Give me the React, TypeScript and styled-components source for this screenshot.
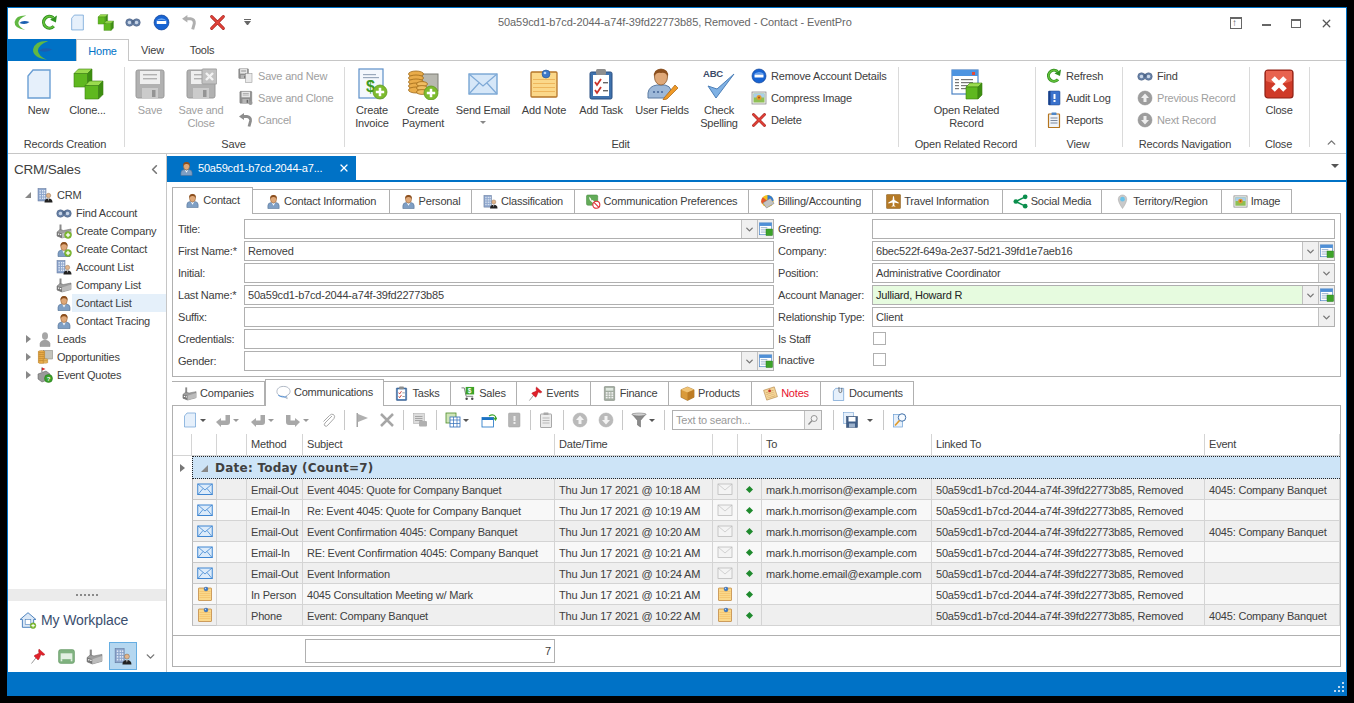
import React from "react";
import styled, { createGlobalStyle, css } from "styled-components";
import { ChevronDown, ChevronLeft, ChevronUp, X as XIcon } from "lucide-react";

const Global = createGlobalStyle`
  html, body { margin: 0; padding: 0; background: #000; width: 1354px; height: 703px; overflow: hidden; }
  #root { width: 1354px; height: 703px; }
  * { box-sizing: border-box; }
  body { font-family: "Liberation Sans", Arial, sans-serif; font-size: 11px; letter-spacing: -0.2px; color: #404040; }
`;

/* ---------- icon drawings ---------- */
const cube = (x: number, y: number, s: number) => (
  <g stroke="#3d7f12" strokeWidth="0.6">
    <polygon points={`${x},${y + .25 * s} ${x + .25 * s},${y} ${x + s},${y} ${x + .75 * s},${y + .25 * s}`} fill="#9adb4e" />
    <polygon points={`${x},${y + .25 * s} ${x + .75 * s},${y + .25 * s} ${x + .75 * s},${y + s} ${x},${y + s}`} fill="#5fb81f" />
    <polygon points={`${x + .75 * s},${y + .25 * s} ${x + s},${y} ${x + s},${y + .75 * s} ${x + .75 * s},${y + s}`} fill="#3c8f10" />
  </g>
);
const plus = (cx: number, cy: number, r = 7) => (
  <g>
    <circle cx={cx} cy={cy} r={r} fill="#7dbb2e" stroke="#5f9a1c" strokeWidth="0.8" />
    <rect x={cx - r * .6} y={cy - r * .18} width={r * 1.2} height={r * .36} fill="#fff" />
    <rect x={cx - r * .18} y={cy - r * .6} width={r * .36} height={r * 1.2} fill="#fff" />
  </g>
);
const personShape = (
  <g>
    <path d="M4 31V25Q4 19 11 18L16 21 21 18Q28 19 28 25V31Z" fill="#7f9fc4" stroke="#4e6d92" strokeWidth="1.2" />
    <path d="M12 18L16 25 20 18 16 21Z" fill="#fff" />
    <ellipse cx="16" cy="11" rx="6.5" ry="8" fill="#dfa878" stroke="#8a5a30" strokeWidth="1" />
    <path d="M9 11Q8 2 16 2 24 2 23 11 21 6 16 6.5 11 6 9 11Z" fill="#8b4f1e" />
  </g>
);
const buildingShape = (
  <g>
    <rect x="2" y="3" width="16" height="25" fill="#8ea6cc" stroke="#5d7298" />
    {[6, 11, 16, 21].map(y => [5, 10, 14].map(x => <rect key={`${x}${y}`} x={x} y={y} width="2.6" height="3" fill="#dfe8f5" />))}
    <circle cx="23" cy="17" r="4.4" fill="#e2b58c" stroke="#7a5a3a" strokeWidth=".8" />
    <path d="M15 31Q15 23 23 23 31 23 31 31Z" fill="#222" />
    <path d="M22 23h2l-1 5z" fill="#fff" />
  </g>
);
const factoryShape = (
  <g>
    <rect x="7" y="3" width="4" height="12" fill="#8a8a8a" />
    <path d="M2 18L8 13 15 15 30 12V25L12 30 2 26Z" fill="#9d9d9d" stroke="#666" />
    <path d="M2 18L12 21V30L2 26Z" fill="#777" />
    <path d="M12 21L30 15V25L12 30Z" fill="#bcbcbc" />
    <rect x="4" y="21" width="2.5" height="2.5" fill="#fff" /><rect x="8" y="22" width="2.5" height="2.5" fill="#fff" />
  </g>
);
const noteShape = (
  <g>
    <rect x="3" y="4" width="26" height="25" rx="1" fill="#fbd88a" stroke="#b5752a" strokeWidth="1.3" />
    {[11, 15, 19, 23].map(y => <rect key={y} x="5" y={y} width="22" height="1" fill="#eeb65c" />)}
    <circle cx="18" cy="6" r="4" fill="#3d78c8" stroke="#27548f" strokeWidth=".6" />
    <circle cx="17" cy="5" r="1.3" fill="#bcd7f5" />
  </g>
);
const binocShape = (
  <g>
    <circle cx="9" cy="17" r="7.5" fill="#6680a6" stroke="#465b7d" />
    <circle cx="23" cy="17" r="7.5" fill="#6680a6" stroke="#465b7d" />
    <circle cx="9" cy="17" r="3.6" fill="#c9d6e8" /><circle cx="23" cy="17" r="3.6" fill="#c9d6e8" />
    <rect x="13" y="12" width="6" height="6" fill="#4f6688" />
  </g>
);
const minusShape = (
  <g>
    <circle cx="16" cy="16" r="14" fill="#1763d2" stroke="#0e3f93" strokeWidth="1.3" />
    <path d="M5 13Q16 3 27 13 16 10 5 13Z" fill="#6ca5f0" />
    <rect x="7" y="13" width="18" height="6" rx="1" fill="#fff" />
  </g>
);
const undoShape = (
  <g fill="none" stroke="#8d8d8d" strokeWidth="5.6">
    <path d="M10 9H18Q26 10 25 18L22 29" />
    <path d="M2 9L12 2V16Z" fill="#8d8d8d" stroke="none" />
  </g>
);
const redX = (
  <g fill="none" strokeLinecap="round">
    <path d="M5 5L27 27M27 5L5 27" stroke="#a8201a" strokeWidth="5.6" />
    <path d="M5 5L27 27M27 5L5 27" stroke="#e2433a" strokeWidth="3.4" />
  </g>
);
const floppyShape = (
  <g>
    <rect x="2" y="2" width="28" height="28" rx="2" fill="#8f8f8f" stroke="#6f6f6f" />
    <rect x="6" y="3" width="20" height="13" fill="#e6e6e6" />
    <rect x="9" y="6" width="14" height="1.4" fill="#8f8f8f" /><rect x="9" y="10" width="14" height="1.4" fill="#8f8f8f" />
    <rect x="8" y="20" width="16" height="10" fill="#b5b5b5" /><rect x="18" y="22" width="3.5" height="7" fill="#666" />
  </g>
);
const fieldEdit = (
  <g>
    <rect x="1" y="2" width="28" height="27" fill="#fff" stroke="#4f86c6" strokeWidth="1.6" />
    <rect x="1" y="2" width="28" height="7" fill="#4f8fd6" />
    {[12, 17, 22].map(y => <rect key={y} x="4" y={y} width="15" height="2" fill="#8ea8c8" />)}
    <rect x="16" y="16" width="15" height="15" fill="#3da329" stroke="#25761a" />
  </g>
);

const shapes: Record<string, React.ReactNode> = {
  logo: (
    <g>
      <path d="M25 3Q6 2 3 15 2 27 23 30 11 25 10 17 11 8 25 3Z" fill="#62b843" />
      <path d="M12 17Q18 11 31 15 24 21 12 17Z" fill="#1a5fb0" />
    </g>
  ),
  refresh: (
    <g fill="none">
      <path d="M24 23A11 11 0 1 1 23 7" stroke="#2d8a1c" strokeWidth="6" />
      <path d="M24 23A11 11 0 1 1 23 7" stroke="#63c23a" strokeWidth="3" />
      <path d="M17 11L30 3 28 16Z" fill="#2f9220" />
    </g>
  ),
  doc: <path d="M10 2H27V30H5V8Z" fill="#e6f0fb" stroke="#6b9fd4" strokeWidth="1.4" />,
  clone: <g>{cube(2, 1, 18)}{cube(13, 13, 18)}</g>,
  binoc: binocShape,
  minus: minusShape,
  undo: undoShape,
  x: redX,
  floppy: floppyShape,
  saveClose: (
    <g>{floppyShape}<rect x="17" y="1" width="15" height="15" rx="1" fill="#a8a8a8" stroke="#777" /><path d="M21 5L28 12M28 5L21 12" stroke="#eee" strokeWidth="2.4" /></g>
  ),
  saveNew: (
    <g>
      <g transform="scale(.7)">{floppyShape}</g>
      <rect x="15" y="11" width="13" height="18" fill="#e9e9e9" stroke="#8d8d8d" />
    </g>
  ),
  saveClone: <g><g transform="translate(2 1) scale(.85)">{floppyShape}</g><circle cx="25" cy="26" r="4" fill="#9a9a9a" /></g>,
  invoice: (
    <g>
      <rect x="3" y="1" width="24" height="29" fill="#f4f8fd" stroke="#5c8fc8" strokeWidth="1.2" />
      <rect x="7" y="6" width="13" height="1.2" fill="#9aa9bc" /><rect x="7" y="9" width="16" height="1.2" fill="#9aa9bc" />
      <text x="10" y="24" fontSize="16" fontWeight="700" fontFamily="Liberation Sans" fill="#3c9a25">$</text>
      {plus(24, 24, 7)}
    </g>
  ),
  payment: (
    <g>
      <rect x="13" y="6" width="18" height="17" fill="#b8b8b0" stroke="#7d7d75" />
      {[2, 6, 10, 14, 18].map(y => <ellipse key={y} cx="9" cy={y + 4} rx="7.5" ry="3" fill="#e9ac4a" stroke="#a06a18" strokeWidth=".8" />)}
      {[14, 18, 22].map(y => <ellipse key={y} cx="15" cy={y + 2} rx="5.5" ry="2.4" fill="#f0bd62" stroke="#a06a18" strokeWidth=".8" />)}
      {plus(24, 25, 7)}
    </g>
  ),
  envelope: (
    <g>
      <rect x="2" y="6" width="28" height="20" fill="#d6e7f8" stroke="#6e9fd0" strokeWidth="1.3" />
      <path d="M2 6L16 18 30 6M2 26L12 15M30 26L20 15" fill="none" stroke="#7ea9d6" strokeWidth="1.2" />
    </g>
  ),
  envelopeRow: (
    <g>
      <rect x="1.5" y="6" width="29" height="21" fill="#dcebfa" stroke="#3f86d2" strokeWidth="2" />
      <path d="M2 6L16 18 30 6M2 27L12 15M30 27L20 15" fill="none" stroke="#3f86d2" strokeWidth="1.6" />
    </g>
  ),
  note: noteShape,
  task: (
    <g>
      <rect x="5" y="4" width="22" height="27" rx="1.5" fill="#3f72ad" stroke="#2a4f80" />
      <rect x="8" y="7" width="16" height="21" fill="#fff" />
      <rect x="11" y="1" width="10" height="6" rx="1.5" fill="#8e8e8e" />
      <path d="M10 14L12 17 16 11M10 22L12 25 16 19" fill="none" stroke="#c9342b" strokeWidth="1.8" />
      <rect x="18" y="14" width="5" height="1.4" fill="#666" /><rect x="18" y="22" width="5" height="1.4" fill="#666" />
    </g>
  ),
  userFields: (
    <g>
      <path d="M2 30V25Q3 18 11 17H19Q24 18 25 22L20 30Z" fill="#9db8d8" stroke="#5b7ba2" />
      <ellipse cx="15" cy="9" rx="6.5" ry="8" fill="#dfa878" stroke="#8a5a30" strokeWidth=".8" />
      <path d="M8 9Q7 1 15 1 23 1 22 9 20 4 15 5 10 4 8 9Z" fill="#8b4f1e" />
      {[8, 12, 16].map(x => <circle key={x} cx={x} cy="24" r="1.1" fill="#49699a" />)}
      <path d="M18 30L29 17 32 20 21 31 17 32Z" fill="#ef9a27" stroke="#a8620e" strokeWidth=".7" />
    </g>
  ),
  spell: (
    <g>
      <text x="0" y="9" fontSize="9.5" fontWeight="700" fontFamily="Liberation Sans" fill="#3b4a68">ABC</text>
      <path d="M5 18L13 30 31 6 14 21Z" fill="#7fb1e4" stroke="#4c7fb8" strokeWidth="1" />
    </g>
  ),
  image: (
    <g>
      <rect x="2" y="4" width="28" height="24" fill="#f0f0f0" stroke="#7d7d7d" strokeWidth="1.4" />
      <rect x="5" y="7" width="22" height="18" fill="#8fbf55" />
      <rect x="5" y="7" width="22" height="8" fill="#a9cdea" />
      <circle cx="16" cy="15" r="5" fill="#e49a2e" /><circle cx="16" cy="15" r="2" fill="#a8501a" />
    </g>
  ),
  related: (
    <g>
      <rect x="1" y="2" width="26" height="24" fill="#fff" stroke="#4b82c4" strokeWidth="1.2" />
      <rect x="1" y="2" width="26" height="6" fill="#4d94e0" /><rect x="21" y="4" width="3" height="3" fill="#e04a3a" />
      {[11, 14, 17, 20].map(y => <g key={y}><rect x="4" y={y} width="4" height="1.2" fill="#777" /><rect x="10" y={y} width="12" height="1.2" fill="#777" /></g>)}
      {cube(15, 15, 16)}
    </g>
  ),
  audit: (
    <g>
      <rect x="5" y="2" width="23" height="28" rx="2" fill="#3a72cc" stroke="#1e4488" />
      <rect x="5" y="2" width="4" height="28" fill="#18408a" />
      <rect x="15" y="8" width="4" height="10" rx="1" fill="#fff" /><rect x="15" y="20" width="4" height="4" fill="#fff" />
    </g>
  ),
  reports: (
    <g>
      <rect x="5" y="4" width="22" height="27" rx="1" fill="#f0f4f9" stroke="#b5751f" strokeWidth="2.4" />
      <rect x="11" y="1" width="10" height="5" rx="1" fill="#4d86c8" />
      {[11, 16, 21].map(y => <rect key={y} x="9" y={y} width="14" height="2" fill="#7d8aa0" />)}
    </g>
  ),
  up: (
    <g>
      <circle cx="16" cy="16" r="14" fill="#9d9d9d" stroke="#8a8a8a" />
      <path d="M16 7L24 16H19V24H13V16H8Z" fill="#eee" />
    </g>
  ),
  down: (
    <g>
      <circle cx="16" cy="16" r="14" fill="#9d9d9d" stroke="#8a8a8a" />
      <path d="M16 25L24 16H19V8H13V16H8Z" fill="#eee" />
    </g>
  ),
  closeBig: (
    <g>
      <rect x="2" y="2" width="28" height="28" rx="3" fill="#cf3a28" stroke="#8f2015" strokeWidth="1.2" />
      <path d="M3 3H29V13Q16 18 3 13Z" fill="#e8634f" />
      <path d="M10 10L22 22M22 10L10 22" stroke="#fff" strokeWidth="5" />
    </g>
  ),
  person: personShape,
  building: buildingShape,
  factory: factoryShape,
  addCompany: <g>{factoryShape}{plus(24, 24, 7)}</g>,
  addContact: <g>{personShape}{plus(24, 24, 7)}</g>,
  lead: (
    <g>
      <ellipse cx="16" cy="10" rx="6" ry="7.5" fill="#a6a6a6" />
      <path d="M6 31V25Q7 19 16 18 25 19 26 25V31Z" fill="#a0a0a0" stroke="#8c8c8c" />
    </g>
  ),
  opp: (
    <g>
      <rect x="13" y="3" width="18" height="17" fill="#c3c3bb" stroke="#7d7d75" />
      {[2, 6, 10, 14, 18, 22].map(y => <ellipse key={y} cx="9" cy={y + 4} rx="7" ry="3" fill="#e9ac4a" stroke="#a06a18" strokeWidth=".8" />)}
      {[20, 24].map(y => <ellipse key={y} cx="17" cy={y + 2} rx="5" ry="2.4" fill="#f0bd62" stroke="#a06a18" strokeWidth=".8" />)}
    </g>
  ),
  quote: (
    <g>
      <rect x="9" y="1" width="1.6" height="9" fill="#555" /><path d="M10 1L17 4 10 7Z" fill="#d02828" />
      <path d="M2 14L18 8 26 14V24L10 30 2 24Z" fill="#9a9a9a" stroke="#555" />
      <circle cx="23" cy="23" r="8" fill="#3aa12a" stroke="#25761a" />
      <text x="19.6" y="27.5" fontSize="12" fontWeight="700" fontFamily="Liberation Sans" fill="#fff">?</text>
    </g>
  ),
  commPref: (
    <g>
      <rect x="1" y="2" width="24" height="22" rx="3" fill="#63ab59" stroke="#3a8033" />
      <path d="M7 6Q6 14 15 19L18 16 14 13 12 14 10 9Z" fill="#fff" />
      <circle cx="22" cy="23" r="7.5" fill="#fff" stroke="#e02d35" strokeWidth="2.4" />
      <path d="M17 18L27 28" stroke="#e02d35" strokeWidth="2.4" />
    </g>
  ),
  billing: (
    <g>
      <circle cx="16" cy="15" r="13" fill="#f4c21b" />
      <path d="M16 15L16 2A13 13 0 0 1 29 15Z" fill="#2f7bd6" />
      <path d="M16 15L4 21A13 13 0 0 1 6 7Z" fill="#e6572c" />
      <path d="M6 19L22 9 30 20 14 30Z" fill="#c3c3c3" stroke="#777" />
    </g>
  ),
  plane: (
    <g>
      <rect x="1" y="1" width="30" height="30" rx="1.5" fill="#b57a26" stroke="#7d5214" />
      <path d="M15 5H17L18 13 27 18V20L18 18 17.5 24 20 26V27L16 26 12 27V26L14.5 24 14 18 5 20V18L14 13Z" fill="#fff" />
    </g>
  ),
  share: (
    <g fill="#0b8f4d">
      <circle cx="6" cy="16" r="5" /><circle cx="26" cy="6" r="5" /><circle cx="26" cy="26" r="5" />
      <path d="M6 16L26 6M6 16L26 26" stroke="#0b8f4d" strokeWidth="3" fill="none" />
    </g>
  ),
  mapPin: (
    <g>
      <path d="M16 31Q7 18 7 11A9 9 0 0 1 25 11Q25 18 16 31Z" fill="#c9c9c9" stroke="#a7a7a7" />
      <circle cx="16" cy="11" r="5" fill="#69c3ea" />
    </g>
  ),
  bubble: (
    <g>
      <path d="M16 3C7 3 2 8 2 14 2 20 7 24 15 24L24 29 22 23C27 21 30 18 30 14 30 8 25 3 16 3Z" fill="#fff" stroke="#8a96a8" strokeWidth="1.4" />
      <path d="M5 22C10 26 18 26 22 25" fill="none" stroke="#3f86d6" strokeWidth="2" />
    </g>
  ),
  sales: (
    <g>
      <path d="M1 4H7L11 22H26" fill="none" stroke="#555" strokeWidth="1.6" />
      <rect x="10" y="2" width="18" height="16" fill="#3da329" />
      <text x="14.5" y="15" fontSize="14" fontWeight="700" fontFamily="Liberation Sans" fill="#fff">$</text>
      <circle cx="12" cy="27" r="2.6" fill="#444" /><circle cx="24" cy="27" r="2.6" fill="#444" />
    </g>
  ),
  pin: (
    <g>
      <path d="M3 31L14 17" stroke="#999" strokeWidth="2" />
      <path d="M18 2L30 13 26 15 22 13 19 20Q18 23 16 24L8 16Q10 13 13 13L18 10 17 6Z" fill="#e0212b" stroke="#a5131b" strokeWidth=".8" />
    </g>
  ),
  calc: (
    <g>
      <rect x="5" y="1" width="22" height="30" rx="1.5" fill="#a2aca0" stroke="#6f786e" />
      <rect x="8" y="4" width="16" height="6" fill="#dfe8df" />
      {[13, 18, 23].map(y => [8, 14, 20].map(x => <rect key={`${x}${y}`} x={x} y={y} width="4" height="3.5" fill="#f2f2f2" />))}
    </g>
  ),
  box: (
    <g>
      <path d="M16 2L30 8V24L16 31 2 24V8Z" fill="#d99a3a" stroke="#8b5a16" />
      <path d="M2 8L16 14 30 8 16 2Z" fill="#f1c476" />
      <path d="M16 14V31L30 24V8Z" fill="#bd7c24" />
    </g>
  ),
  noteTag: (
    <g transform="rotate(-18 16 16)">
      <rect x="4" y="5" width="24" height="22" fill="#f4d59a" stroke="#a3722f" />
      {[11, 15, 19, 23].map(y => <rect key={y} x="7" y={y} width="17" height="1" fill="#c79a55" />)}
      <circle cx="16" cy="10" r="3" fill="#c7302a" />
    </g>
  ),
  docs: (
    <g>
      <path d="M10 5H27V31H5V11Z" fill="#e6f0fb" stroke="#5f93cc" strokeWidth="1.4" />
      <path d="M17 2V11Q17 14 20 14 23 14 23 11V4" fill="none" stroke="#4a4a4a" strokeWidth="1.5" />
    </g>
  ),
  reply: <path d="M2 20L12 12V17H21V6H30V20Q30 26 24 26H12V30Z" fill="#a8a8a8" />,
  forward: <path d="M30 20L20 12V17H11V6H2V20Q2 26 8 26H20V30Z" fill="#a8a8a8" />,
  clip: (
    <path d="M24 8L10 22Q7 26 10 28 13 30 16 26L28 13Q31 8 27 5 23 3 19 7L7 19" fill="none" stroke="#a9a9a9" strokeWidth="2" />
  ),
  flag: (
    <g>
      <rect x="5" y="2" width="3" height="28" fill="#a4a4a4" />
      <path d="M8 4L28 12 8 20Z" fill="#b0b0b0" />
    </g>
  ),
  xGrey: <path d="M4 4L28 28M28 4L4 28" stroke="#a6a6a6" strokeWidth="5" />,
  printer: (
    <g>
      <rect x="3" y="3" width="22" height="20" fill="#dcdcdc" stroke="#a6a6a6" />
      {[8, 12, 16].map(y => <rect key={y} x="6" y={y} width="15" height="2" fill="#a6a6a6" />)}
      <rect x="14" y="18" width="16" height="11" rx="2" fill="#b0b0b0" />
    </g>
  ),
  table: (
    <g>
      <rect x="2" y="2" width="20" height="20" fill="#cfe4b8" stroke="#4d8d28" strokeWidth="1.6" />
      <rect x="10" y="10" width="20" height="20" fill="#fff" stroke="#2d6cb8" strokeWidth="1.6" />
      <path d="M10 16H30M10 23H30M17 10V30M24 10V30" stroke="#2d6cb8" strokeWidth="1.4" />
    </g>
  ),
  windowArrow: (
    <g>
      <rect x="2" y="11" width="23" height="19" fill="#fff" stroke="#1b72c4" strokeWidth="1.6" />
      <rect x="2" y="11" width="23" height="5" fill="#1b72c4" />
      <path d="M16 8Q24 3 29 9V15M25 11L29 16 32 11" fill="none" stroke="#3da329" strokeWidth="2.2" />
    </g>
  ),
  bookGrey: (
    <g>
      <rect x="5" y="2" width="23" height="28" rx="2" fill="#b5b5b5" stroke="#a0a0a0" />
      <rect x="15" y="8" width="4" height="10" fill="#eee" /><rect x="15" y="20" width="4" height="4" fill="#eee" />
    </g>
  ),
  clipGrey: (
    <g>
      <rect x="5" y="4" width="22" height="27" rx="1" fill="#ececec" stroke="#a8a8a8" strokeWidth="2" />
      <rect x="11" y="1" width="10" height="5" rx="1" fill="#a8a8a8" />
      {[11, 16, 21].map(y => <rect key={y} x="9" y={y} width="14" height="2" fill="#b8b8b8" />)}
    </g>
  ),
  funnel: (
    <g>
      <path d="M2 4H30L19 17V30L13 26V17Z" fill="#8a8a8a" stroke="#5f5f5f" />
      <ellipse cx="16" cy="5" rx="14" ry="3" fill="#d0d0d0" stroke="#777" />
    </g>
  ),
  saveBlue: (
    <g>
      <rect x="3" y="1" width="20" height="22" fill="#e6f0fb" stroke="#5f93cc" />
      <rect x="9" y="9" width="22" height="22" fill="#3f5e88" stroke="#2a4468" />
      <rect x="13" y="10" width="14" height="9" fill="#fff" />
      <rect x="14" y="23" width="12" height="8" fill="#9db2cc" />
    </g>
  ),
  magnify: (
    <g>
      <rect x="3" y="5" width="18" height="25" fill="#e6f0fb" stroke="#6b9fd4" strokeWidth="1.4" />
      <circle cx="20" cy="11" r="7.5" fill="#f7fbff" stroke="#3f6fa8" strokeWidth="2" />
      <path d="M15 17L6 27" stroke="#e09a2a" strokeWidth="3.4" />
    </g>
  ),
  search: (
    <g>
      <circle cx="19" cy="12" r="8" fill="#f4f4f4" stroke="#8a8a8a" strokeWidth="2.4" />
      <path d="M13 18L4 28" stroke="#8a8a8a" strokeWidth="3.4" />
    </g>
  ),
  house: (
    <g>
      <path d="M16 3L30 15H26V29H6V15H2Z" fill="#dbe8f6" stroke="#3f78b8" strokeWidth="1.6" />
      <rect x="11" y="15" width="10" height="9" fill="#fff" stroke="#3f78b8" />
      {plus(25, 26, 5)}
    </g>
  ),
  bed: (
    <g>
      <rect x="1" y="3" width="30" height="26" rx="4" fill="#7fb27f" stroke="#5d925d" />
      <rect x="5" y="10" width="22" height="11" fill="#e2efe2" />
      <rect x="5" y="21" width="3" height="4" fill="#e2efe2" /><rect x="24" y="21" width="3" height="4" fill="#e2efe2" />
    </g>
  ),
  fieldEdit,
  envelopeGrey: (
    <g>
      <rect x="2" y="6" width="28" height="21" fill="#f4f4f4" stroke="#b0b0b0" strokeWidth="1.3" />
      <path d="M2 6L16 18 30 6" fill="none" stroke="#b8b8b8" strokeWidth="1.2" />
    </g>
  ),
};

const Svg = styled.svg<{ $muted?: boolean }>`
  flex: none;
  display: block;
  ${p => p.$muted && css`filter: grayscale(1) opacity(.7);`}
`;
const Icon = ({ name, size = 16, muted }: { name: string; size?: number; muted?: boolean }) => (
  <Svg viewBox="0 0 32 32" width={size} height={size} $muted={muted}>{shapes[name]}</Svg>
);

/* ---------- window ---------- */
const Screen = styled.div`
  width: 1354px; height: 703px; padding: 7px; background: #000;
`;
const Win = styled.div`
  width: 1340px; height: 689px; border: 1px solid #0072c6; background: #fff;
  display: flex; flex-direction: column;
`;
const TitleBar = styled.div`
  height: 31px; display: flex; align-items: center; padding-bottom: 3px; flex: none;
`;
const Qat = styled.div`
  display: flex; align-items: center; margin-left: -1px;
`;
const QatBtn = styled.div`
  width: 28px; height: 24px; display: flex; align-items: center; justify-content: center;
`;
const QatMore = styled.div`
  width: 32px; display: flex; justify-content: center;
`;
const MoreGlyph = styled.div`
  width: 7px; height: 6px; border-top: 1px solid #666;
  &::after { content: ""; display: block; margin-top: 1px; border: 3px solid transparent; border-top: 4px solid #666; border-bottom: 0; }
`;
const TitleText = styled.div`
  margin-left: 235px; font-size: 11px; color: #666; white-space: nowrap; letter-spacing: -0.08px;
`;
const Controls = styled.div`
  margin-left: auto; display: flex; align-items: center; padding: 2px 5px 0 0;
`;
const Ctl = styled.div`
  width: 30px; height: 22px; display: flex; align-items: center; justify-content: center; color: #555;
`;
const PinGlyph = styled.div`
  width: 12px; height: 12px; border: 1px solid #666; border-top-width: 2px; position: relative;
  &::after { content: "↑"; position: absolute; left: 1px; top: -2px; font-size: 10px; color: #555; line-height: 12px; }
`;
const MinGlyph = styled.div` width: 9px; height: 2px; background: #666; margin-top: 4px; `;
const MaxGlyph = styled.div` width: 10px; height: 9px; border: 1px solid #666; border-top-width: 2px; `;

const TabStrip = styled.div`
  height: 22px; flex: none; display: flex; border-bottom: 1px solid #c6c6c6;
`;
const Logo = styled.div`
  width: 68px; height: 22px; background: #0072c6; display: flex; align-items: center; justify-content: center; flex: none;
`;
const RTab = styled.div<{ $w: number; $on?: boolean }>`
  width: ${p => p.$w}px; height: 22px; text-align: center; line-height: 23px; font-size: 11px;
  color: ${p => p.$on ? "#0072c6" : "#404040"};
  ${p => p.$on && css`background: #fff; border: 1px solid #c6c6c6; border-bottom: 0;`}
`;

const Ribbon = styled.div`
  height: 93px; flex: none; display: flex; border-bottom: 1px solid #c6c6c6; padding-top: 6px;
`;
const Group = styled.div<{ $w: number; $last?: boolean }>`
  width: ${p => p.$w}px; height: 80px; display: flex; flex-direction: column; flex: none;
  ${p => !p.$last && css`border-right: 1px solid #dadada;`}
`;
const GroupBody = styled.div<{ $pl?: number }>`
  flex: 1; display: flex; padding-left: ${p => p.$pl || 0}px; min-height: 0;
`;
const GroupLabel = styled.div`
  height: 14px; line-height: 14px; margin-bottom: -4px; padding-right: 2px; text-align: center; color: #404040; white-space: nowrap;
`;
const Big = styled.div<{ $w: number; $off?: boolean }>`
  width: ${p => p.$w}px; flex: none; display: flex; flex-direction: column; align-items: center; padding-top: 1px;
  color: ${p => p.$off ? "#a0a0a0" : "#404040"};
`;
const BigText = styled.div`
  margin-top: 4px; text-align: center; line-height: 13px; white-space: pre-line;
`;
const Caret = styled.div<{ $c?: string }>`
  width: 0; height: 0; border-left: 3px solid transparent; border-right: 3px solid transparent; border-top: 3px solid ${p => p.$c || "#555"}; flex: none;
`;
const BigCaret = styled(Caret)` margin-top: 4px; border-top-color: #888; `;
const SmallCol = styled.div<{ $ml?: number }>`
  display: flex; flex-direction: column; margin-top: -2px; margin-left: ${p => p.$ml || 0}px;
`;
const Small = styled.div<{ $off?: boolean }>`
  height: 22px; display: flex; align-items: center; gap: 4px; white-space: nowrap;
  color: ${p => p.$off ? "#a0a0a0" : "#404040"};
`;
const CollapseBtn = styled.div`
  margin: 69px 0 0 15px; color: #777;
`;

/* ---------- middle ---------- */
const Middle = styled.div` flex: 1; display: flex; min-height: 0; `;
const Side = styled.div`
  width: 159px; flex: none; border-right: 1px solid #c6c6c6; display: flex; flex-direction: column;
`;
const SideHead = styled.div`
  height: 32px; display: flex; align-items: center; justify-content: space-between; padding: 4px 4px 6px 6px;
  font-size: 13.5px; color: #404040; flex: none;
`;
const Tree = styled.div` flex: 1; `;
const TreeRow = styled.div<{ $level: number }>`
  height: 18px; display: flex; align-items: center; padding-left: ${p => p.$level ? 48 : 8}px;
`;
const Exp = styled.div<{ $open?: boolean }>`
  width: 21px; display: flex; justify-content: center; flex: none; padding-left: 3px;
  &::before {
    content: ""; width: 0; height: 0;
    ${p => p.$open
      ? css`border-bottom: 6px solid #888; border-left: 6px solid transparent;`
      : css`border-left: 5px solid #888; border-top: 4px solid transparent; border-bottom: 4px solid transparent;`}
  }
`;
const TreeText = styled.div<{ $sel?: boolean }>`
  flex: 1; height: 18px; line-height: 18px; padding-left: 4px; color: #404040;
  background: ${p => p.$sel ? "#e5f0fa" : "transparent"};
`;
const Splitter = styled.div`
  height: 12px; background: #ebebeb; flex: none; display: flex; align-items: center; justify-content: center;
`;
const Dots = styled.div`
  width: 22px; height: 2px; background: repeating-linear-gradient(90deg, #8a8a8a 0 2px, transparent 2px 4px);
`;
const Workplace = styled.div`
  height: 37px; flex: none; display: flex; align-items: center; gap: 4px; padding: 0 0 0 11px;
  font-size: 14px; color: #3a4e6e; letter-spacing: -.1px;
`;
const NavIcons = styled.div`
  height: 28px; display: flex; padding-left: 16px; margin: 4px 0 2px; flex: none;
`;
const NavIcon = styled.div<{ $on?: boolean }>`
  width: 28px; height: 28px; display: flex; align-items: center; justify-content: center;
  ${p => p.$on && css`background: #b5d7f0; border: 1px solid #66aee2; margin-left: 1px;`}
`;
const NavMore = styled.div` width: 26px; display: flex; align-items: center; justify-content: center; color: #777; `;

const Main = styled.div` flex: 1; display: flex; flex-direction: column; min-width: 0; `;
const DocBar = styled.div`
  height: 28px; flex: none; padding-top: 2px; border-bottom: 2px solid #0072c6; display: flex; justify-content: space-between;
`;
const DocTab = styled.div`
  width: 189px; height: 24px; background: #0072c6; color: #fff; display: flex; align-items: center; padding: 0 6px 0 12px; gap: 4px;
`;
const DocTitle = styled.div` flex: 1; white-space: nowrap; `;
const DocDrop = styled.div`
  width: 0; height: 0; margin: 8px 7px 0 0;
  border-left: 4px solid transparent; border-right: 4px solid transparent; border-top: 4px solid #555;
`;
const Content = styled.div` flex: 1; padding: 5px; display: flex; flex-direction: column; min-height: 0; `;
const TabsRow = styled.div<{ $h: number }>`
  height: ${p => p.$h}px; display: flex; align-items: flex-end; flex: none; position: relative; z-index: 1;
`;
const Tab = styled.div<{ $w: number; $on?: boolean; $c?: string }>`
  width: ${p => p.$w}px; flex: none; display: flex; align-items: center; justify-content: center; gap: 3px; white-space: nowrap;
  background: #fff; color: ${p => p.$c || "#404040"}; padding-bottom: 1px;
  border: 1px solid #b0b0b0; border-left-width: ${p => p.$on ? 1 : 0}px; border-bottom: 0;
  ${p => p.$on
    ? css`height: calc(100% + 1px); margin-bottom: -1px; padding-bottom: 2px;`
    : css`height: calc(100% - 2px);`}
`;
const Panel = styled.div<{ $h?: number; $grow?: boolean }>`
  border: 1px solid #b0b0b0; background: #fff; flex: ${p => p.$grow ? 1 : "none"}; min-height: 0;
  ${p => p.$h && css`height: ${p.$h}px;`}
  display: flex; flex-direction: column;
`;
const Form = styled.div`
  display: flex; gap: 4px; padding: 5px 5px 0 5px;
`;
const FormCol = styled.div<{ $t: string }>`
  display: grid; grid-template-columns: ${p => p.$t}; grid-auto-rows: 20px; row-gap: 2px;
`;
const Lab = styled.div<{ $up?: boolean }>`
  line-height: 20px; white-space: nowrap; color: #404040; ${p => p.$up && css`margin-top: -1px;`}
`;
const Field = styled.div<{ $bg?: string }>`
  height: 20px; border: 1px solid #b0b0b0; background: ${p => p.$bg || "#fff"}; display: flex; align-items: stretch; line-height: 18px;
`;
const FieldVal = styled.div<{ $dark?: boolean }>`
  flex: 1; padding-left: 3px; color: ${p => p.$dark ? "#222" : "#404040"}; white-space: nowrap;
`;
const FieldBtn = styled.div`
  width: 16px; flex: none; background: #f0f0f0; border-left: 1px solid #c0c0c0; display: flex; align-items: center; justify-content: center; color: #777;
`;
const Check = styled.div<{ $up?: number }>`
  width: 13px; height: 13px; border: 1px solid #b0b0b0; background: #fff; margin: ${p => 3 - (p.$up || 0)}px 0 0 1px;
`;
const SubTabs = styled(TabsRow)` margin-top: 2px; `;

const Toolbar = styled.div`
  height: 28px; flex: none; display: flex; align-items: center;
`;
const Tool = styled.div<{ $ml: number; $gap?: number }>`
  margin-left: ${p => p.$ml}px; display: flex; align-items: center; gap: ${p => p.$gap ?? 2}px; flex: none;
`;
const Sep = styled.div<{ $ml: number }>`
  margin-left: ${p => p.$ml}px; width: 1px; height: 20px; background: #c8c8c8; flex: none;
`;
const SearchBox = styled.div<{ $ml: number }>`
  margin-left: ${p => p.$ml}px; width: 150px; height: 20px; flex: none; border: 1px solid #b0b0b0; display: flex; line-height: 18px; color: #999;
`;
const SearchText = styled.div` flex: 1; padding-left: 3px; `;
const SearchBtn = styled.div`
  width: 17px; background: #f0f0f0; border-left: 1px solid #c0c0c0; display: flex; align-items: center; justify-content: center;
`;

const GridWrap = styled.div` flex: 1; min-height: 0; `;
const cols = "19px 25px 30px 56px 252px 158px 25px 24px 170px 273px 135px";
const GridRow = styled.div`
  display: grid; grid-template-columns: ${cols};
`;
const Head = styled.div`
  height: 22px; line-height: 20px; padding-left: 4px; border-right: 1px solid #d4d4d4; border-bottom: 1px solid #d4d4d4; color: #404040; white-space: nowrap;
`;
const IndicatorCell = styled.div`
  display: flex; align-items: center; justify-content: center;
`;
const Tri = styled.div`
  width: 0; height: 0; border-left: 5px solid #777; border-top: 4px solid transparent; border-bottom: 4px solid transparent;
`;
const GroupCell = styled.div`
  grid-column: 2 / -1; height: 23px; background: #cde4f7;
  border-top: 1px dotted #222; border-bottom: 1px dotted #222; border-left: 1px dotted #222;
  display: flex; align-items: center; padding: 1px 0 0 8px; gap: 7px;
  font-family: "DejaVu Sans", sans-serif; font-weight: 700; font-size: 12px; letter-spacing: .25px; color: #404040;
`;
const GroupTri = styled.div`
  width: 0; height: 0; border-bottom: 7px solid #888; border-left: 7px solid transparent;
`;
const Cell = styled.div<{ $alt: boolean; $icon?: boolean; $first?: boolean }>`
  height: 21px; line-height: 22px; padding-left: ${p => p.$icon ? 0 : 4}px; white-space: nowrap; overflow: hidden;
  background: ${p => p.$alt ? "#f8f8f8" : "#efefef"}; color: #404040;
  border-right: 1px solid #d4d4d4; border-bottom: 1px solid #d4d4d4;
  ${p => p.$first && css`border-left: 1px solid #b8b8b8; border-bottom-color: #c8c8c8;`}
  ${p => p.$icon && css`display: flex; align-items: center; justify-content: center;`}
`;
const Diamond = styled.div`
  width: 5px; height: 5px; background: #1f8a2e; transform: rotate(45deg);
`;
const Footer = styled.div`
  height: 31px; flex: none; border-top: 1px solid #b0b0b0; padding: 3px 0 0 132px;
`;
const FooterBox = styled.div`
  width: 250px; height: 24px; border: 1px solid #b0b0b0; text-align: right; padding-right: 3px; line-height: 22px; color: #404040;
`;
const Status = styled.div`
  height: 23px; flex: none; background: #0072c6; display: flex; align-items: flex-end; justify-content: flex-end;
`;

/* ---------- data ---------- */
const tree = [
  { t: "CRM", i: "building", level: 0, open: true },
  { t: "Find Account", i: "binoc", level: 1 },
  { t: "Create Company", i: "addCompany", level: 1 },
  { t: "Create Contact", i: "addContact", level: 1 },
  { t: "Account List", i: "building", level: 1 },
  { t: "Company List", i: "factory", level: 1 },
  { t: "Contact List", i: "person", level: 1, sel: true },
  { t: "Contact Tracing", i: "person", level: 1 },
  { t: "Leads", i: "lead", level: 0 },
  { t: "Opportunities", i: "opp", level: 0 },
  { t: "Event Quotes", i: "quote", level: 0 },
];
const tabs = [
  { t: "Contact", i: "person", w: 81, on: true },
  { t: "Contact Information", i: "person", w: 137 },
  { t: "Personal", i: "person", w: 82 },
  { t: "Classification", i: "building", w: 103 },
  { t: "Communication Preferences", i: "commPref", w: 174 },
  { t: "Billing/Accounting", i: "billing", w: 124 },
  { t: "Travel Information", i: "plane", w: 130 },
  { t: "Social Media", i: "share", w: 99 },
  { t: "Territory/Region", i: "mapPin", w: 120 },
  { t: "Image", i: "image", w: 70 },
];
const subTabs = [
  { t: "Companies", i: "factory", w: 93 },
  { t: "Communications", i: "bubble", w: 119, on: true },
  { t: "Tasks", i: "task", w: 67 },
  { t: "Sales", i: "sales", w: 66 },
  { t: "Events", i: "pin", w: 74 },
  { t: "Finance", i: "calc", w: 78 },
  { t: "Products", i: "box", w: 83 },
  { t: "Notes", i: "noteTag", w: 69, c: "#e8112d" },
  { t: "Documents", i: "docs", w: 93 },
];
const linked = "50a59cd1-b7cd-2044-a74f-39fd22773b85, Removed";
const q = "4045: Company Banquet";
const rows = [
  ["envelopeRow", "Email-Out", "Event 4045: Quote for Company Banquet", "Thu Jun 17 2021 @ 10:18 AM", "envelopeGrey", "mark.h.morrison@example.com", q],
  ["envelopeRow", "Email-In", "Re: Event 4045: Quote for Company Banquet", "Thu Jun 17 2021 @ 10:19 AM", "envelopeGrey", "mark.h.morrison@example.com", ""],
  ["envelopeRow", "Email-Out", "Event Confirmation 4045: Company Banquet", "Thu Jun 17 2021 @ 10:20 AM", "envelopeGrey", "mark.h.morrison@example.com", q],
  ["envelopeRow", "Email-In", "RE: Event Confirmation 4045: Company Banquet", "Thu Jun 17 2021 @ 10:21 AM", "envelopeGrey", "mark.h.morrison@example.com", ""],
  ["envelopeRow", "Email-Out", "Event Information", "Thu Jun 17 2021 @ 10:24 AM", "envelopeGrey", "mark.home.email@example.com", ""],
  ["note", "In Person", "4045 Consultation Meeting w/ Mark", "Thu Jun 17 2021 @ 10:21 AM", "note", "", ""],
  ["note", "Phone", "Event: Company Banquet", "Thu Jun 17 2021 @ 10:22 AM", "note", "", q],
];
const Chev = () => <ChevronDown size={11} strokeWidth={3} />;

const leftFields: [string, string, boolean?][] = [
  ["Title:", "", true], ["First Name:*", "Removed"], ["Initial:", ""],
  ["Last Name:*", "50a59cd1-b7cd-2044-a74f-39fd22773b85"], ["Suffix:", ""], ["Credentials:", ""], ["Gender:", "", true],
];

export default function App() {
  return (
    <Screen>
      <Global />
      <Win>
        <TitleBar>
          <Qat>
            {["logo", "refresh", "doc", "clone", "binoc", "minus", "undo", "x"].map(n => (
              <QatBtn key={n}><Icon name={n} size={n === "binoc" ? 16 : 17} muted={n === "undo"} /></QatBtn>
            ))}
            <QatMore><MoreGlyph /></QatMore>
          </Qat>
          <TitleText>50a59cd1-b7cd-2044-a74f-39fd22773b85, Removed - Contact - EventPro</TitleText>
          <Controls>
            <Ctl><PinGlyph /></Ctl>
            <Ctl><MinGlyph /></Ctl>
            <Ctl><MaxGlyph /></Ctl>
            <Ctl><XIcon size={13} strokeWidth={2.4} /></Ctl>
          </Controls>
        </TitleBar>
        <TabStrip>
          <Logo><Icon name="logo" size={22} /></Logo>
          <RTab $w={53} $on>Home</RTab>
          <RTab $w={47}>View</RTab>
          <RTab $w={52}>Tools</RTab>
        </TabStrip>
        <Ribbon>
          <Group $w={117}>
            <GroupBody $pl={6}>
              <Big $w={49}><Icon name="doc" size={32} /><BigText>New</BigText></Big>
              <Big $w={49}><Icon name="clone" size={32} /><BigText>Clone...</BigText></Big>
            </GroupBody>
            <GroupLabel>Records Creation</GroupLabel>
          </Group>
          <Group $w={220}>
            <GroupBody $pl={8}>
              <Big $w={34} $off><Icon name="floppy" size={32} muted /><BigText>Save</BigText></Big>
              <Big $w={68} $off><Icon name="saveClose" size={32} muted /><BigText>{"Save and\nClose"}</BigText></Big>
              <SmallCol $ml={3}>
                <Small $off><Icon name="saveNew" size={16} /> Save and New</Small>
                <Small $off><Icon name="saveClone" size={16} /> Save and Clone</Small>
                <Small $off><Icon name="undo" size={16} /> Cancel</Small>
              </SmallCol>
            </GroupBody>
            <GroupLabel>Save</GroupLabel>
          </Group>
          <Group $w={554}>
            <GroupBody $pl={6}>
              <Big $w={42}><Icon name="invoice" size={32} /><BigText>{"Create\nInvoice"}</BigText></Big>
              <Big $w={60}><Icon name="payment" size={32} /><BigText>{"Create\nPayment"}</BigText></Big>
              <Big $w={60}><Icon name="envelope" size={32} /><BigText>Send Email</BigText><BigCaret /></Big>
              <Big $w={62}><Icon name="note" size={32} /><BigText>Add Note</BigText></Big>
              <Big $w={52}><Icon name="task" size={32} /><BigText>Add Task</BigText></Big>
              <Big $w={70}><Icon name="userFields" size={32} /><BigText>User Fields</BigText></Big>
              <Big $w={44}><Icon name="spell" size={32} /><BigText>{"Check\nSpelling"}</BigText></Big>
              <SmallCol $ml={10}>
                <Small><Icon name="minus" size={16} /> Remove Account Details</Small>
                <Small><Icon name="image" size={16} /> Compress Image</Small>
                <Small><Icon name="x" size={16} /> Delete</Small>
              </SmallCol>
            </GroupBody>
            <GroupLabel>Edit</GroupLabel>
          </Group>
          <Group $w={137}>
            <GroupBody><Big $w={135}><Icon name="related" size={32} /><BigText>{"Open Related\nRecord"}</BigText></Big></GroupBody>
            <GroupLabel>Open Related Record</GroupLabel>
          </Group>
          <Group $w={87}>
            <GroupBody $pl={10}>
              <SmallCol>
                <Small><Icon name="refresh" size={16} /> Refresh</Small>
                <Small><Icon name="audit" size={16} /> Audit Log</Small>
                <Small><Icon name="reports" size={16} /> Reports</Small>
              </SmallCol>
            </GroupBody>
            <GroupLabel>View</GroupLabel>
          </Group>
          <Group $w={127}>
            <GroupBody $pl={14}>
              <SmallCol>
                <Small><Icon name="binoc" size={16} /> Find</Small>
                <Small $off><Icon name="up" size={16} /> Previous Record</Small>
                <Small $off><Icon name="down" size={16} /> Next Record</Small>
              </SmallCol>
            </GroupBody>
            <GroupLabel>Records Navigation</GroupLabel>
          </Group>
          <Group $w={60}>
            <GroupBody><Big $w={58}><Icon name="closeBig" size={32} /><BigText>Close</BigText></Big></GroupBody>
            <GroupLabel>Close</GroupLabel>
          </Group>
          <CollapseBtn><ChevronUp size={13} strokeWidth={2.6} /></CollapseBtn>
        </Ribbon>
        <Middle>
          <Side>
            <SideHead>CRM/Sales<ChevronLeft size={15} strokeWidth={2.6} color="#777" /></SideHead>
            <Tree>
              {tree.map(r => (
                <TreeRow key={r.t} $level={r.level}>
                  {r.level === 0 && <Exp $open={r.open} />}
                  <Icon name={r.i} size={16} />
                  <TreeText $sel={r.sel}>{r.t}</TreeText>
                </TreeRow>
              ))}
            </Tree>
            <Splitter><Dots /></Splitter>
            <Workplace><Icon name="house" size={18} />My Workplace</Workplace>
            <NavIcons>
              <NavIcon><Icon name="pin" size={16} /></NavIcon>
              <NavIcon><Icon name="bed" size={17} /></NavIcon>
              <NavIcon><Icon name="factory" size={17} /></NavIcon>
              <NavIcon $on><Icon name="building" size={18} /></NavIcon>
              <NavMore><ChevronDown size={13} strokeWidth={2.6} /></NavMore>
            </NavIcons>
          </Side>
          <Main>
            <DocBar>
              <DocTab>
                <Icon name="person" size={15} />
                <DocTitle>50a59cd1-b7cd-2044-a7...</DocTitle>
                <XIcon size={12} strokeWidth={2.4} />
              </DocTab>
              <DocDrop />
            </DocBar>
            <Content>
              <TabsRow $h={26}>
                {tabs.map(t => (
                  <Tab key={t.t} $w={t.w} $on={t.on}><Icon name={t.i} size={15} />{t.t}</Tab>
                ))}
              </TabsRow>
              <Panel $h={164}>
                <Form>
                  <FormCol $t="66px 530px">
                    {leftFields.map(([l, v, combo]) => (
                      <React.Fragment key={l}>
                        <Lab>{l}</Lab>
                        <Field>
                          <FieldVal>{v}</FieldVal>
                          {combo && <FieldBtn><Chev /></FieldBtn>}
                          {combo && <FieldBtn><Icon name="fieldEdit" size={14} /></FieldBtn>}
                        </Field>
                      </React.Fragment>
                    ))}
                  </FormCol>
                  <FormCol $t="94px 463px">
                    <Lab>Greeting:</Lab><Field><FieldVal /></Field>
                    <Lab>Company:</Lab>
                    <Field><FieldVal>6bec522f-649a-2e37-5d21-39fd1e7aeb16</FieldVal><FieldBtn><Chev /></FieldBtn><FieldBtn><Icon name="fieldEdit" size={14} /></FieldBtn></Field>
                    <Lab>Position:</Lab>
                    <Field><FieldVal>Administrative Coordinator</FieldVal><FieldBtn><Chev /></FieldBtn></Field>
                    <Lab>Account Manager:</Lab>
                    <Field $bg="#e6fbdf"><FieldVal $dark>Julliard, Howard R</FieldVal><FieldBtn><Chev /></FieldBtn><FieldBtn><Icon name="fieldEdit" size={14} /></FieldBtn></Field>
                    <Lab>Relationship Type:</Lab>
                    <Field><FieldVal>Client</FieldVal><FieldBtn><Chev /></FieldBtn></Field>
                    <Lab>Is Staff</Lab><Check />
                    <Lab $up>Inactive</Lab><Check $up={1} />
                  </FormCol>
                </Form>
              </Panel>
              <SubTabs $h={26}>
                {subTabs.map(t => (
                  <Tab key={t.t} $w={t.w} $on={t.on} $c={t.c}><Icon name={t.i} size={15} />{t.t}</Tab>
                ))}
              </SubTabs>
              <Panel $grow>
                <Toolbar>
                  <Tool $ml={9}><Icon name="doc" size={16} /><Caret /></Tool>
                  <Tool $ml={9}><Icon name="reply" size={16} /><Caret $c="#999" /></Tool>
                  <Tool $ml={11}><Icon name="reply" size={16} /><Caret $c="#999" /></Tool>
                  <Tool $ml={11}><Icon name="forward" size={16} /><Caret $c="#999" /></Tool>
                  <Tool $ml={11}><Icon name="clip" size={16} /></Tool>
                  <Sep $ml={8} />
                  <Tool $ml={9}><Icon name="flag" size={16} /></Tool>
                  <Tool $ml={9}><Icon name="xGrey" size={16} /></Tool>
                  <Sep $ml={8} />
                  <Tool $ml={8}><Icon name="printer" size={16} /></Tool>
                  <Sep $ml={8} />
                  <Tool $ml={8}><Icon name="table" size={16} /><Caret /></Tool>
                  <Tool $ml={12}><Icon name="windowArrow" size={16} /></Tool>
                  <Tool $ml={9}><Icon name="bookGrey" size={16} /></Tool>
                  <Sep $ml={8} />
                  <Tool $ml={7}><Icon name="clipGrey" size={16} /></Tool>
                  <Sep $ml={9} />
                  <Tool $ml={8}><Icon name="up" size={16} muted /></Tool>
                  <Tool $ml={10}><Icon name="down" size={16} muted /></Tool>
                  <Sep $ml={8} />
                  <Tool $ml={8}><Icon name="funnel" size={16} /><Caret /></Tool>
                  <Sep $ml={9} />
                  <SearchBox $ml={7}><SearchText>Text to search...</SearchText><SearchBtn><Icon name="search" size={12} /></SearchBtn></SearchBox>
                  <Sep $ml={11} />
                  <Tool $ml={8} $gap={9}><Icon name="saveBlue" size={16} /><Caret /></Tool>
                  <Sep $ml={10} />
                  <Tool $ml={8}><Icon name="magnify" size={16} /></Tool>
                </Toolbar>
                <GridWrap>
                  <GridRow>
                    {["", "", "", "Method", "Subject", "Date/Time", "", "", "To", "Linked To", "Event"].map((h, i) => <Head key={i}>{h}</Head>)}
                  </GridRow>
                  <GridRow>
                    <IndicatorCell><Tri /></IndicatorCell>
                    <GroupCell><GroupTri />Date: Today (Count=7)</GroupCell>
                  </GridRow>
                  {rows.map((r, i) => {
                    const alt = i % 2 === 1;
                    return (
                      <GridRow key={i}>
                        <div />
                        <Cell $alt={alt} $icon $first><Icon name={r[0]} size={16} /></Cell>
                        <Cell $alt={alt} />
                        <Cell $alt={alt}>{r[1]}</Cell>
                        <Cell $alt={alt}>{r[2]}</Cell>
                        <Cell $alt={alt}>{r[3]}</Cell>
                        <Cell $alt={alt} $icon><Icon name={r[4]} size={16} /></Cell>
                        <Cell $alt={alt} $icon><Diamond /></Cell>
                        <Cell $alt={alt}>{r[5]}</Cell>
                        <Cell $alt={alt}>{linked}</Cell>
                        <Cell $alt={alt}>{r[6]}</Cell>
                      </GridRow>
                    );
                  })}
                </GridWrap>
                <Footer><FooterBox>7</FooterBox></Footer>
              </Panel>
            </Content>
          </Main>
        </Middle>
        <Status>
          <svg width="14" height="14" viewBox="0 0 14 14" style={{ marginBottom: 1 }}>
            {[[10, 2], [10, 6], [10, 10], [6, 6], [6, 10], [2, 10]].map(([x, y]) => <rect key={`${x}${y}`} x={x} y={y} width="2" height="2" fill="#bcd9f0" />)}
          </svg>
        </Status>
      </Win>
    </Screen>
  );
}
